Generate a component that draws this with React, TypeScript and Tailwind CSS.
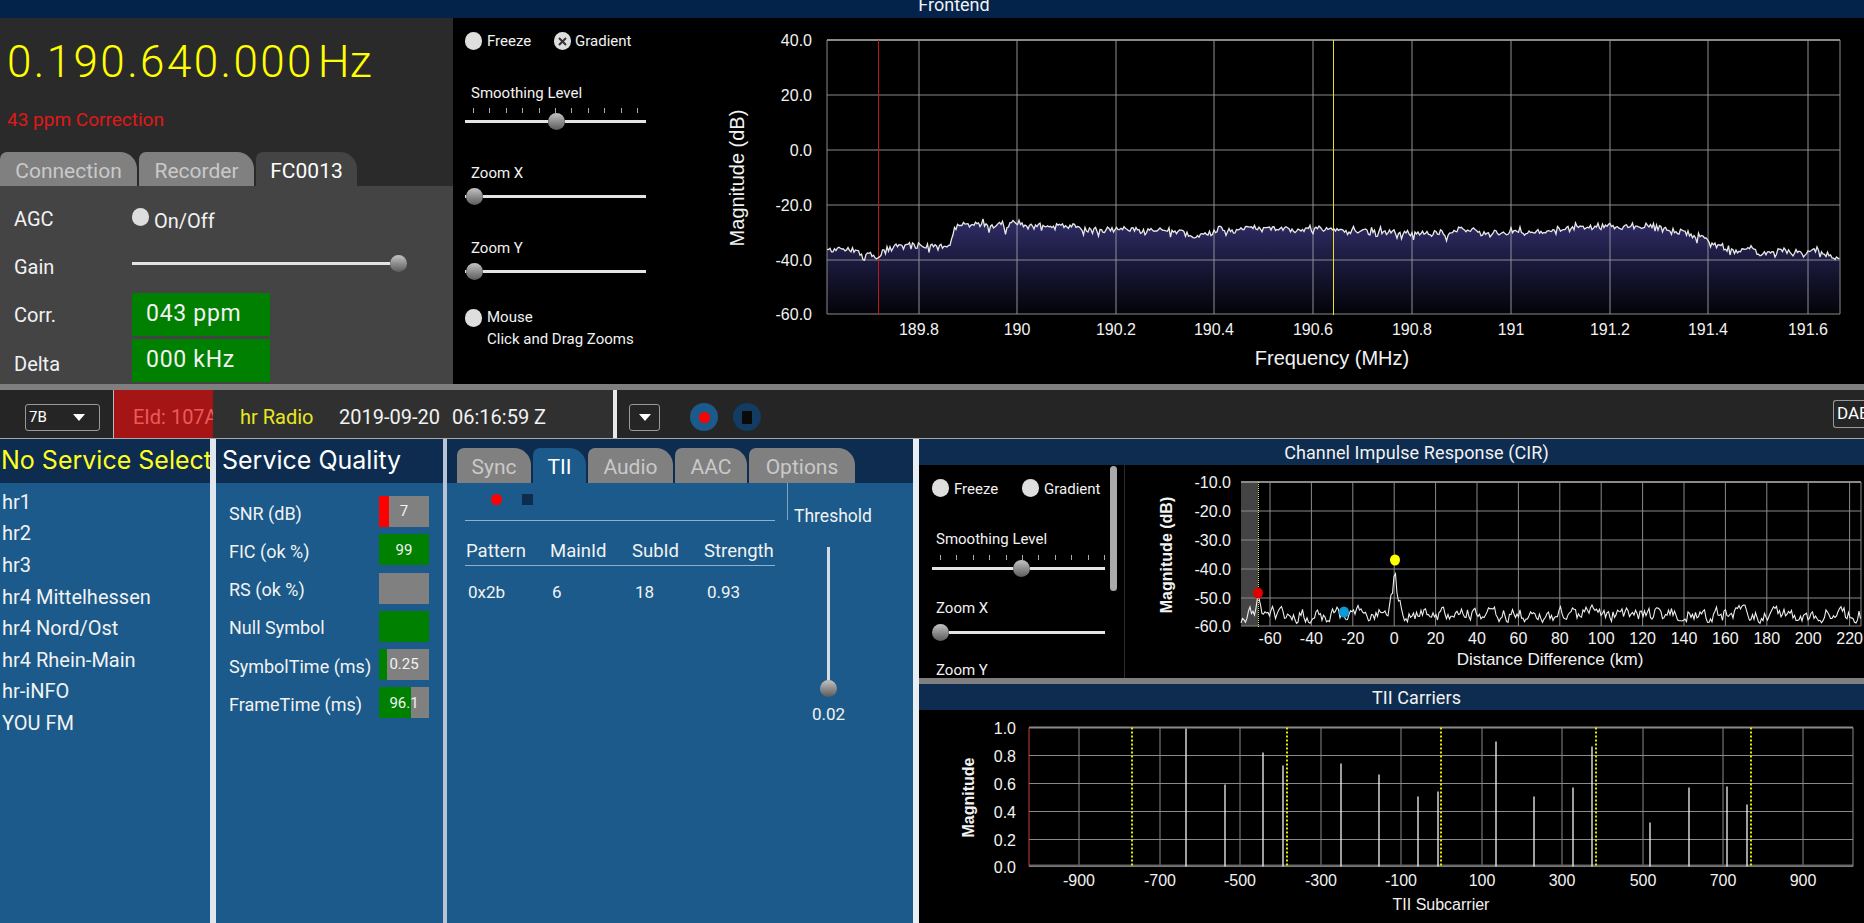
const BODY = "font-['Roboto',sans-serif]";
const TITLE = "font-['Inter',sans-serif]";
const ARIAL = "'Liberation Sans', Arial, sans-serif";

// small seeded generator so the traces stay the same on every render
function makeRandom(seed: number) {
  let s = seed;
  return () => {
    s = (s * 16807) % 2147483647;
    return (s - 1) / 2147483646;
  };
}

function interp(points: number[][], x: number) {
  for (let i = 1; i < points.length; i++) {
    if (x <= points[i][0]) {
      const [x0, y0] = points[i - 1];
      const [x1, y1] = points[i];
      return y0 + ((y1 - y0) * (x - x0)) / (x1 - x0);
    }
  }
  return points[points.length - 1][1];
}

const spectrumEnvelope = [
  [827, 250], [860, 250], [872, 256], [878, 261], [884, 250], [900, 246], [950, 246], [955, 226],
  [1017, 225], [1060, 226], [1110, 230], [1190, 234], [1260, 229], [1320, 229], [1400, 232], [1500, 232],
  [1620, 226], [1670, 229], [1700, 236], [1720, 247], [1760, 250], [1840, 254],
];

function spectrumPoints() {
  const rand = makeRandom(4711);
  const pts: string[] = [];
  let slow = 0;
  for (let x = 827; x <= 1840; x += 1.5) {
    slow = 0.82 * slow + 0.18 * (rand() - 0.5) * 16;
    const r = rand();
    const spike = r > 0.94 ? 6 : r < 0.05 ? -3 : 0;
    pts.push(`${x.toFixed(1)},${(interp(spectrumEnvelope, x) + slow + (rand() - 0.5) * 5 + spike).toFixed(1)}`);
  }
  return pts.join(" ");
}

function cirPoints() {
  const rand = makeRandom(977);
  const pts: string[] = [];
  let level = 620;
  for (let x = 1241; x <= 1861; x += 1.5) {
    level = 0.5 * level + 0.5 * (628 - rand() * 25);
    const main = 52 * Math.exp(-Math.abs(x - 1395) / 3);
    const side = 24 * Math.exp(-Math.abs(x - 1258) / 1.4);
    pts.push(`${x},${Math.min(627, level - main - side).toFixed(1)}`);
  }
  return pts.join(" ");
}

const spectrum = spectrumPoints();
const cir = cirPoints();

const Radio = ({ checked = false }: { checked?: boolean }) => (
  <span className="flex h-[18px] w-[17px] shrink-0 items-center justify-center rounded-full bg-[#dedede]">
    {checked && (
      <svg width="9" height="9" viewBox="0 0 9 9">
        <path d="M1 1L8 8M8 1L1 8" stroke="#333" strokeWidth="2" />
      </svg>
    )}
  </span>
);

const Thumb = () => (
  <span className="h-[17px] w-[17px] shrink-0 rounded-full bg-linear-to-b from-[#c4c4c4] to-[#5c5c5c]" />
);

const Slider = ({ left, className = "" }: { left: string; className?: string }) => (
  <div className={`flex h-[17px] items-center ${className}`}>
    <span className={`h-[3px] bg-[#e4e4e4] ${left}`} />
    <Thumb />
    <span className="h-[3px] flex-1 bg-[#e4e4e4]" />
  </div>
);

const Ticks = ({ className = "" }: { className?: string }) => (
  <div className={`flex justify-between ${className}`}>
    {Array.from({ length: 11 }).map((_, i) => (
      <span key={i} className="h-[5px] w-px bg-[#aaa]" />
    ))}
  </div>
);

const Tab = ({ label, active = false, w, activeBg }: { label: string; active?: boolean; w: string; activeBg?: string }) => (
  <div
    className={`flex h-full items-center justify-center rounded-tl-[7px] rounded-tr-[17px] pt-[5px] text-[21px] ${w} ${
      active ? `${activeBg} text-white` : "bg-[#808080] text-[#c9c9c9]"
    }`}
  >
    {label}
  </div>
);

const Divider = ({ className }: { className: string }) => <div className={`shrink-0 ${className}`} />;

const Combo = ({ label, className }: { label?: string; className: string }) => (
  <div className={`flex h-[27px] items-center rounded-[3px] border border-[#999] ${className}`}>
    {label && <span className="pl-[3px] text-[15px] text-white">{label}</span>}
    <svg className="ml-auto mr-[14px]" width="12" height="7" viewBox="0 0 12 7">
      <path d="M0 0H12L6 7Z" fill="#fff" />
    </svg>
  </div>
);

const services = ["hr1", "hr2", "hr3", "hr4 Mittelhessen", "hr4 Nord/Ost", "hr4 Rhein-Main", "hr-iNFO", "YOU FM"];

const quality = [
  { label: "SNR (dB)", value: "7", fill: "w-[10px] bg-[#ff0000]" },
  { label: "FIC (ok %)", value: "99", fill: "w-full bg-[#008000]" },
  { label: "RS (ok %)", value: "", fill: "w-0" },
  { label: "Null Symbol", value: "", fill: "w-full bg-[#008000]" },
  { label: "SymbolTime (ms)", value: "0.25", fill: "w-[8px] bg-[#008000]" },
  { label: "FrameTime (ms)", value: "96.1", fill: "w-[32px] bg-[#008000]" },
];

const SpectrumChart = () => {
  const hLines = [40, 95, 150, 205, 260, 314];
  const hLabels = ["40.0", "20.0", "0.0", "-20.0", "-40.0", "-60.0"];
  const vLines = [919, 1017, 1116, 1214, 1313, 1412, 1511, 1610, 1708, 1808];
  const vLabels = ["189.8", "190", "190.2", "190.4", "190.6", "190.8", "191", "191.2", "191.4", "191.6"];
  return (
    <svg className="block flex-1" viewBox="659 18 1205 366" fontFamily={ARIAL}>
      <defs>
        <linearGradient id="specFill" x1="0" y1="220" x2="0" y2="314" gradientUnits="userSpaceOnUse">
          <stop offset="0" stopColor="#2f2c66" />
          <stop offset="1" stopColor="#030308" />
        </linearGradient>
      </defs>
      <polygon points={`827,314 ${spectrum} 1840,314`} fill="url(#specFill)" />
      {hLines.map((y, i) => (
        <g key={y}>
          <line x1="827" x2="1840" y1={y} y2={y} stroke="#8a8a8a" strokeWidth={i === 0 ? 2 : 1} />
          <text x="812" y={y + 6} textAnchor="end" fontSize="16" fill="#f2f2f2">{hLabels[i]}</text>
        </g>
      ))}
      {vLines.map((x, i) => (
        <g key={x}>
          <line x1={x} x2={x} y1="40" y2="314" stroke="#8f8f9a" />
          <text x={x} y="335" textAnchor="middle" fontSize="16" fill="#f2f2f2">{vLabels[i]}</text>
        </g>
      ))}
      <line x1="827" x2="827" y1="40" y2="314" stroke="#8a8a8a" />
      <line x1="1840" x2="1840" y1="40" y2="314" stroke="#8a8a8a" />
      <line x1="878.5" x2="878.5" y1="40" y2="315" stroke="#c01818" />
      <line x1="1333.5" x2="1333.5" y1="40" y2="315" stroke="#e8e020" />
      <polyline points={spectrum} fill="none" stroke="#e8e8e8" strokeWidth="1.3" />
      <text x="1332" y="365" textAnchor="middle" fontSize="20" fill="#f2f2f2">Frequency (MHz)</text>
      <text transform="translate(744 178) rotate(-90)" textAnchor="middle" fontSize="20" fill="#f2f2f2">Magnitude (dB)</text>
    </svg>
  );
};

const CirChart = () => {
  const hLines = [483, 512, 541, 570, 599, 627];
  const hLabels = ["-10.0", "-20.0", "-30.0", "-40.0", "-50.0", "-60.0"];
  const ticks = Array.from({ length: 15 }, (_, i) => ({ x: 1270 + i * 41.4, label: String(-60 + i * 20) }));
  return (
    <svg className="block flex-1" viewBox="1125 466 739 213" fontFamily={ARIAL}>
      <rect x="1241" y="483" width="17" height="144" fill="#444" />
      {hLines.map((y, i) => (
        <g key={y}>
          <line x1="1241" x2="1861" y1={y} y2={y} stroke="#8a8a8a" strokeWidth={i === 0 ? 2 : 1} />
          <text x="1231" y={y + 6} textAnchor="end" fontSize="16" fill="#f2f2f2">{hLabels[i]}</text>
        </g>
      ))}
      {ticks.map((t) => (
        <g key={t.x}>
          <line x1={t.x} x2={t.x} y1="483" y2="627" stroke="#8a8a8a" />
          <text x={t.x} y="645" textAnchor="middle" fontSize="16" fill="#f2f2f2">{t.label}</text>
        </g>
      ))}
      <line x1="1861" x2="1861" y1="483" y2="627" stroke="#8a8a8a" />
      <line x1="1258.5" x2="1258.5" y1="483" y2="628" stroke="#e6e060" strokeDasharray="1 1" />
      <polyline points={cir} fill="none" stroke="#eee" strokeWidth="1.1" />
      <ellipse cx="1258" cy="594" rx="5" ry="5.5" fill="#e00000" />
      <ellipse cx="1344" cy="613" rx="5" ry="5.5" fill="#0a9ad8" />
      <ellipse cx="1395" cy="561" rx="5" ry="5.5" fill="#ffff00" />
      <text x="1550" y="666" textAnchor="middle" fontSize="17" fill="#f2f2f2">Distance Difference (km)</text>
      <text transform="translate(1172 556) rotate(-90)" textAnchor="middle" fontSize="16" fontWeight="700" fill="#f2f2f2">Magnitude (dB)</text>
    </svg>
  );
};

const TiiChart = () => {
  const hLines = [728, 756, 784, 812, 840, 867];
  const hLabels = ["1.0", "0.8", "0.6", "0.4", "0.2", "0.0"];
  const vLines = [1079, 1160, 1240, 1321, 1401, 1482, 1562, 1643, 1723, 1803];
  const vLabels = ["-900", "-700", "-500", "-300", "-100", "100", "300", "500", "700", "900"];
  const dotted = [1132, 1287, 1441, 1596, 1751];
  const bars = [
    [1186, 729], [1225, 785], [1263, 753], [1283, 766], [1341, 764], [1379, 775], [1418, 797], [1438, 792],
    [1496, 742], [1534, 797], [1573, 788], [1592, 747], [1650, 823], [1689, 788], [1727, 787], [1747, 805],
  ];
  return (
    <svg className="block h-full w-full" viewBox="919 711 945 212" fontFamily={ARIAL}>
      {hLines.map((y, i) => (
        <g key={y}>
          <line x1="1029" x2="1853" y1={y} y2={y} stroke="#8a8a8a" strokeWidth={i === 0 ? 2 : 1} />
          <text x="1016" y={y + 6} textAnchor="end" fontSize="16" fill="#f2f2f2">{hLabels[i]}</text>
        </g>
      ))}
      {vLines.map((x, i) => (
        <g key={x}>
          <line x1={x} x2={x} y1="728" y2="867" stroke="#8a8a8a" />
          <text x={x} y="886" textAnchor="middle" fontSize="16" fill="#f2f2f2">{vLabels[i]}</text>
        </g>
      ))}
      <rect x="1029" y="865" width="824" height="2" fill="#666" />
      <line x1="1853" x2="1853" y1="728" y2="867" stroke="#8a8a8a" />
      <line x1="1029" x2="1029" y1="728" y2="867" stroke="#c84030" />
      {dotted.map((x) => (
        <line key={x} x1={x} x2={x} y1="728" y2="867" stroke="#e6e600" strokeWidth="2" strokeDasharray="2 2" />
      ))}
      {bars.map(([x, y]) => (
        <line key={x} x1={x} x2={x} y1={y} y2="867" stroke="#f4f4f4" strokeWidth="1.3" />
      ))}
      <text x="1441" y="910" textAnchor="middle" fontSize="16" fill="#f2f2f2">TII Subcarrier</text>
      <text transform="translate(974 798) rotate(-90)" textAnchor="middle" fontSize="16" fontWeight="700" fill="#f2f2f2">Magnitude</text>
    </svg>
  );
};

export default function App() {
  return (
    <div className={`flex h-[923px] w-[1864px] flex-col overflow-hidden bg-black text-[#f2f2f2] ${BODY}`}>
      <div className="flex h-[18px] shrink-0 items-center justify-center bg-[#03234a] pb-[9px] pl-[44px] text-[18px] leading-none">
        Frontend
      </div>

      {/* top row */}
      <div className="flex h-[366px] shrink-0">
        <div className="flex w-[453px] shrink-0 flex-col bg-[#2a2a2a]">
          <div className="h-[134px] shrink-0 pl-[7px]">
            <div className="mt-[17px] flex items-center text-[44px] font-light leading-[54px] tracking-[2.4px] text-[#ffff00]">
              0.190.640.000<span className="ml-1 text-[45px] tracking-normal">Hz</span>
            </div>
            <div className="mt-[19px] text-[19px] leading-6 text-[#e01818]">43 ppm Correction</div>
          </div>
          <div className="flex h-[34px] shrink-0 gap-0.5">
            <Tab label="Connection" w="w-[137px]" />
            <Tab label="Recorder" w="w-[115px]" />
            <Tab label="FC0013" w="w-[101px]" active activeBg="bg-[#444444]" />
          </div>
          <div className="flex-1 overflow-hidden bg-[#444444] pl-[14px] pt-[9px] text-[20px]">
            <div className="flex h-12 items-center">
              <span className="w-[118px]">AGC</span>
              <div className="flex items-center gap-[5px]">
                <span className="-mt-1"><Radio /></span>
                <span className="mt-1 text-[20px]">On/Off</span>
              </div>
            </div>
            <div className="flex h-12 items-center">
              <span className="w-[118px]">Gain</span>
              <Slider left="w-[258px]" className="-mt-2 w-[275px]" />
            </div>
            <div className="flex h-12 items-center">
              <span className="w-[118px]">Corr.</span>
              <div className="-mt-0.5 flex h-[43px] w-[138px] items-center bg-[#008000] pl-[14px] text-[23px] tracking-[0.7px]">043 ppm</div>
            </div>
            <div className="flex h-12 items-center">
              <span className="w-[118px] pt-0.5">Delta</span>
              <div className="-mt-1.5 flex h-[43px] w-[138px] items-center bg-[#008000] pl-[14px] text-[23px] tracking-[0.7px]">000 kHz</div>
            </div>
          </div>
        </div>

        <div className="w-[206px] shrink-0 pl-3 pr-[13px] pt-[14px] text-[15px]">
          <div className="flex h-[18px] items-center">
            <Radio />
            <span className="ml-[5px] w-[67px]">Freeze</span>
            <Radio checked />
            <span className="ml-[4px]">Gradient</span>
          </div>
          <div className="mt-[33px] h-5 pl-1.5 leading-5">Smoothing Level</div>
          <Ticks className="mt-[5px] pl-2 pr-2" />
          <Slider left="w-[83px]" className="mt-[-0.5px]" />
          <div className="mt-[33px] h-5 pl-1.5 leading-5">Zoom X</div>
          <Slider left="w-px" className="mt-[5px]" />
          <div className="mt-[33px] h-5 pl-1.5 leading-5">Zoom Y</div>
          <Slider left="w-px" className="mt-[5px]" />
          <div className="mt-[29px] flex h-[18px] items-center">
            <Radio />
            <span className="ml-[5px]">Mouse</span>
          </div>
          <div className="mt-[2px] pl-[22px] leading-5">Click and Drag Zooms</div>
        </div>

        <SpectrumChart />
      </div>

      <Divider className="h-[6px] bg-[#7f7f7f]" />

      {/* toolbar */}
      <div className="flex h-[49px] shrink-0 items-center border-b border-[#a8a8a8] bg-[#252525] text-[20px]">
        <div className="flex h-full w-[113px] shrink-0 items-center pl-[25px] pt-1.5">
          <Combo label="7B" className="w-[75px]" />
        </div>
        <div className="flex h-full w-[100px] shrink-0 items-center whitespace-nowrap border-l border-[#bbb] bg-[#a51515] pl-[19px] pt-1.5 text-[#ec5a5a]">
          EId: 107A
        </div>
        <div className="flex h-full w-[400px] shrink-0 items-center bg-[#303030] pl-[27px] pt-1.5">
          <span className="w-[99px] text-[#e8e820]">hr Radio</span>
          <span className="w-[113px]">2019-09-20</span>
          <span>06:16:59 Z</span>
        </div>
        <Divider className="h-full w-1 bg-[#e8e8e8]" />
        <div className="flex h-full flex-1 items-center pl-3 pt-1.5">
          <Combo className="w-[31px] [&>svg]:mr-[8px]" />
          <span className="ml-[30px] flex h-7 w-7 items-center justify-center rounded-full bg-[#1b5a8a]">
            <span className="h-[11px] w-[11px] rounded-full bg-[#ff0000]" />
          </span>
          <span className="ml-[15px] flex h-7 w-7 items-center justify-center rounded-full bg-[#123c60]">
            <span className="h-[13px] w-[10px] bg-[#0a0a0a]" />
          </span>
          <div className="-mt-1.5 ml-auto flex h-7 w-[31px] items-center overflow-hidden rounded-l-[3px] border-y border-l border-[#999] pl-[3px] text-[17px] text-white">
            DAB
          </div>
        </div>
      </div>

      {/* lower row */}
      <div className="flex min-h-0 flex-1">
        <div className="flex w-[210px] shrink-0 flex-col bg-[#1b5a8a]">
          <div className={`flex h-[44px] shrink-0 items-center overflow-hidden whitespace-nowrap bg-[#0d2c50] pl-px text-[25px] text-[#ffff20] ${TITLE}`}>
            No Service Select
          </div>
          <div className="pl-0.5 pt-[3px] text-[20px]">
            {services.map((s) => (
              <div key={s} className="flex h-[31.6px] items-center">{s}</div>
            ))}
          </div>
        </div>
        <Divider className="w-[6px] bg-[#dfe6ee]" />
        <div className="flex w-[227px] shrink-0 flex-col bg-[#1b5a8a]">
          <div className={`flex h-[44px] shrink-0 items-center overflow-hidden whitespace-nowrap bg-[#0d2c50] pl-[6px] text-[25px] text-white ${TITLE}`}>
            Service Quality
          </div>
          <div className="pl-[13px] pt-[13px] text-[18px]">
            {quality.map((q) => (
              <div key={q.label} className="mb-[7.3px] flex h-[31px] items-center">
                <span className="w-[150px] whitespace-nowrap pt-[3px]">{q.label}</span>
                <div className="relative h-full w-[50px] bg-[#808080]">
                  <div className={`h-full ${q.fill}`} />
                  {q.value && (
                    <span className="absolute inset-0 flex items-center justify-center text-[15px]">{q.value}</span>
                  )}
                </div>
              </div>
            ))}
          </div>
        </div>
        <Divider className="w-[4px] bg-[#b6c4d4]" />
        <div className="flex w-[466px] shrink-0 flex-col bg-[#1b5a8a]">
          <div className="flex h-[44px] shrink-0 gap-0.5 bg-[#0d2c50] pl-[10px] pt-[9px]">
            <Tab label="Sync" w="w-[74px]" />
            <Tab label="TII" w="w-[53px]" active activeBg="bg-[#1b5a8a]" />
            <Tab label="Audio" w="w-[85px]" />
            <Tab label="AAC" w="w-[72px]" />
            <Tab label="Options" w="w-[106px]" />
          </div>
          <div className="flex flex-1 pl-[18px]">
            <div className="w-[310px] shrink-0 text-[18.5px]">
              <div className="flex h-[38px] items-center border-b border-[#8fb0c8] pb-1 pl-[26px]">
                <span className="h-[11px] w-[11px] rounded-full bg-[#ff0000]" />
                <span className="ml-[20px] h-[11px] w-[11px] bg-[#0d2c50]" />
              </div>
              <div className="mt-[20px] flex h-[25px] items-center border-b border-[#8fb0c8] pb-0.5 pl-px">
                <span className="w-[84px]">Pattern</span>
                <span className="w-[82px]">MainId</span>
                <span className="w-[72px]">SubId</span>
                <span>Strength</span>
              </div>
              <div className="mt-[15px] flex h-6 items-center pl-[3px] text-[17px]">
                <span className="w-[84px]">0x2b</span>
                <span className="w-[83px]">6</span>
                <span className="w-[72px]">18</span>
                <span>0.93</span>
              </div>
            </div>
            <div className="ml-3 flex flex-col">
              <div className="flex">
                <span className="h-[37px] w-px bg-[#7fa4be]" />
                <span className="ml-1.5 mt-[22px] text-[17.5px] leading-[22px]">Threshold</span>
              </div>
              <div className="ml-[33px] mt-[20px] flex w-[17px] flex-col items-center">
                <span className="h-[133px] w-[3px] bg-[#d6dce2]" />
                <Thumb />
              </div>
              <span className="ml-[25px] mt-[5px] text-[17px] leading-6">0.02</span>
            </div>
          </div>
        </div>
        <Divider className="w-[6px] bg-[#e8eef2]" />

        <div className="flex min-w-0 flex-1 flex-col">
          <div className="flex h-[26px] shrink-0 items-center justify-center bg-[#0d2c50] pl-[50px] text-[18px] tracking-[0.1px]">
            Channel Impulse Response (CIR)
          </div>
          <div className="flex h-[213px] shrink-0 overflow-hidden">
            <div className="flex w-[206px] shrink-0 border-r border-[#2a2a2a] text-[15px]">
              <div className="w-[191px] shrink-0 pl-[13px] pr-[5px] pt-[14px]">
                <div className="flex h-[18px] items-center">
                  <Radio />
                  <span className="ml-[5px] w-[68px] pt-0.5">Freeze</span>
                  <Radio />
                  <span className="ml-[5px] pt-0.5">Gradient</span>
                </div>
                <div className="mt-[32px] h-5 pl-1 leading-5">Smoothing Level</div>
                <Ticks className="mt-[6px] pl-2 pr-0" />
                <Slider left="w-[81px]" className="mt-[-0.5px]" />
                <div className="mt-[21px] h-5 pl-1 leading-5">Zoom X</div>
                <Slider left="w-0" className="mt-1.5" />
                <div className="mt-[19px] h-5 pl-1 leading-5">Zoom Y</div>
              </div>
              <span className="mt-px h-[125px] w-[7px] shrink-0 rounded-full bg-[#aaaaaa]" />
            </div>
            <CirChart />
          </div>
          <Divider className="h-[6px] bg-[#7f7f7f]" />
          <div className="flex h-[26px] shrink-0 items-center justify-center bg-[#0d2c50] pl-[50px] text-[18px] tracking-[0.1px]">
            TII Carriers
          </div>
          <div className="min-h-0 flex-1">
            <TiiChart />
          </div>
        </div>
      </div>
    </div>
  );
}
